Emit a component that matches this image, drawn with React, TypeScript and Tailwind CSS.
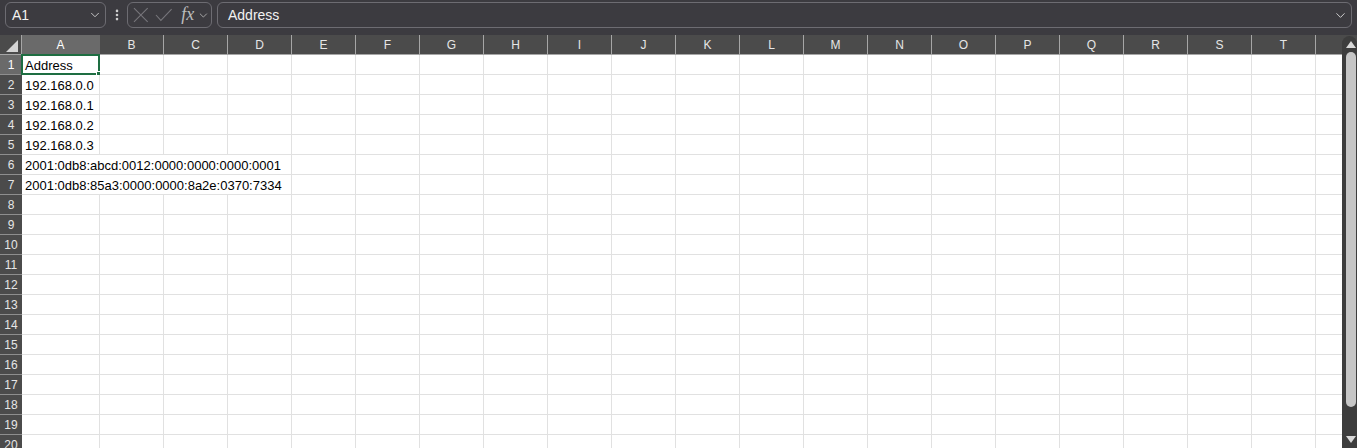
import React from "react";
import { ChevronDown, EllipsisVertical } from "lucide-react";

const COLS = "ABCDEFGHIJKLMNOPQRST".split("");

const DATA: Record<number, string> = {
  1: "Address",
  2: "192.168.0.0",
  3: "192.168.0.1",
  4: "192.168.0.2",
  5: "192.168.0.3",
  6: "2001:0db8:abcd:0012:0000:0000:0000:0001",
  7: "2001:0db8:85a3:0000:0000:8a2e:0370:7334",
};

// rows whose text spills over B..D, so those gridlines are hidden
const SPILL = [6, 7];

const colWidth = (c: string) => (c === "A" ? "w-[78px]" : "w-[64px]");

const TopBar = () => (
  <div className="h-[35px] flex items-start pt-[2px] pl-[5px] shrink-0">
    <div className="w-[101px] h-[26px] border border-[#6d6c72] rounded-[6px] flex items-center justify-between pl-[6px] pr-[3px]">
      <span className="text-[14px] text-[#f2f2f2]">A1</span>
      <ChevronDown size={14} strokeWidth={1.5} className="text-[#d6d6d6]" />
    </div>
    <div className="h-[26px] w-[21px] flex items-center justify-center">
      <EllipsisVertical size={14} strokeWidth={2.5} className="text-[#d0d0d0]" />
    </div>
    <div className="w-[85px] h-[26px] border border-[#6d6c72] rounded-[6px] flex items-center pl-[5px] pr-[1px]">
      <svg width="16" height="16" viewBox="0 0 16 16" className="text-[#77767b]">
        <path d="M1 1L15 15M15 1L1 15" stroke="currentColor" strokeWidth="1.1" fill="none" />
      </svg>
      <svg width="18" height="14" viewBox="0 0 18 14" className="text-[#77767b] ml-[6px]">
        <path d="M1 7L6 12.5L17 1" stroke="currentColor" strokeWidth="1.1" fill="none" />
      </svg>
      <span className="ml-[9px] text-[18px] italic text-[#bdbdbd] font-['Liberation_Serif',serif] leading-none pb-[2px]">fx</span>
      <ChevronDown size={13} strokeWidth={1.5} className="text-[#bdbdbd] ml-[3px]" />
    </div>
    <div className="ml-[5px] w-[1135px] h-[26px] border border-[#6d6c72] rounded-[6px] flex items-center justify-between pl-[10px] pr-[3px]">
      <span className="text-[14px] text-[#f2f2f2]">Address</span>
      <ChevronDown size={15} strokeWidth={1.5} className="text-[#d6d6d6]" />
    </div>
  </div>
);

const HeaderRow = () => (
  <div className="flex h-[20px] bg-[#4b4b4b] border-b border-[#a6a6a6]">
    <div className="w-[22px] relative border-r border-[#a6a6a6]">
      <div className="absolute right-[3px] bottom-[2px] w-0 h-0 border-l-[12px] border-l-transparent border-b-[12px] border-b-[#d4d4d4]" />
    </div>
    {COLS.map((c) => (
      <div
        key={c}
        className={`${colWidth(c)} shrink-0 flex items-center justify-center text-[12px] border-r ${
          c === "A" ? "bg-[#6a6a6a] text-white border-[#6a6a6a]" : "text-[#e6e6e6] border-[#a6a6a6]"
        }`}
      >
        {c}
      </div>
    ))}
    <div className="flex-1" />
  </div>
);

const Row = ({ n }: { n: number }) => {
  const spill = SPILL.includes(n);
  const cells = spill ? ["A", ...COLS.slice(4)] : COLS;
  return (
    <div className="flex h-[20px]">
      <div
        className={`w-[22px] shrink-0 flex items-center justify-center pt-[1px] text-[12px] border-b border-[#8e8e8e] ${
          n === 1 ? "bg-[#6a6a6a] text-white" : "bg-[#4b4b4b] text-[#e6e6e6]"
        }`}
      >
        {n}
      </div>
      {cells.map((c) => {
        const w = c === "A" && spill ? "w-[270px]" : colWidth(c);
        const text = c === "A" ? DATA[n] : undefined;
        return (
          <div
            key={c}
            className={`${w} shrink-0 relative bg-white border-r border-b border-[#e1e1e1] flex items-center pl-[3px] pt-[3px] text-[13px] text-black whitespace-nowrap`}
          >
            {text}
            {n === 1 && c === "A" && (
              <div className="absolute -left-px -top-px w-[79px] h-[21px] border-2 border-[#1e6e42]">
                <div className="absolute -right-[3px] -bottom-[3px] w-[5px] h-[5px] bg-[#1e6e42] border border-white" />
              </div>
            )}
          </div>
        );
      })}
      <div className="flex-1 bg-white border-b border-[#e1e1e1]" />
    </div>
  );
};

const ScrollBar = () => (
  <div className="w-[15px] shrink-0 bg-[#4b4b4b] flex flex-col">
    <div className="flex-1 mt-[1px] bg-[#3d3d3d] rounded-tl-[8px] rounded-tr-[8px] flex flex-col items-center pl-[2px]">
      <div className="mt-[5px] w-0 h-0 border-l-[5px] border-l-transparent border-r-[5px] border-r-transparent border-b-[7px] border-b-[#d8d8d8]" />
      <div className="mt-[4px] w-[10px] h-[355px] bg-[#c6c6c6] rounded-[5px]" />
      <div className="mt-[29px] w-0 h-0 border-l-[5px] border-l-transparent border-r-[5px] border-r-transparent border-t-[7px] border-t-[#d8d8d8]" />
    </div>
  </div>
);

export default function App() {
  const rows = Array.from({ length: 20 }, (_, i) => i + 1);
  return (
    <div className="w-[1357px] h-[448px] overflow-hidden bg-[#3c3b40] flex flex-col font-['Liberation_Sans',Arial,sans-serif]">
      <TopBar />
      <div className="flex flex-1 min-h-0">
        <div className="flex-1 min-w-0 overflow-hidden">
          <HeaderRow />
          {rows.map((n) => (
            <Row key={n} n={n} />
          ))}
        </div>
        <ScrollBar />
      </div>
    </div>
  );
}
